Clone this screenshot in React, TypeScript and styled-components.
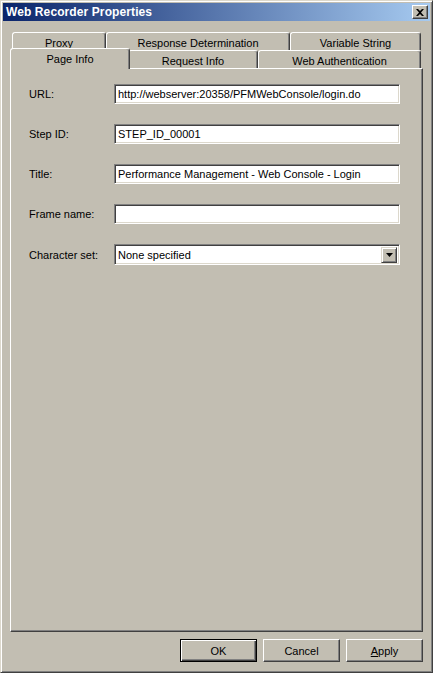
import React from 'react';
import styled, { createGlobalStyle } from 'styled-components';

const FACE = '#c2beb2';

const Global = createGlobalStyle`
  html, body { margin: 0; padding: 0; background: ${FACE}; }
  body { font-family: "Liberation Sans", Arial, sans-serif; }
`;

const Window = styled.div`
  box-sizing: border-box;
  width: 433px;
  height: 673px;
  background: ${FACE};
  border: 1px solid;
  border-color: #dcd8cc #404040 #404040 #dcd8cc;
  box-shadow: inset 1px 1px #fff, inset -1px -1px #808080;
  padding: 2px;
  display: flex;
  flex-direction: column;
`;

const TitleBar = styled.div`
  height: 18px;
  flex: none;
  background: linear-gradient(to right, #0a246a, #a6caf0);
  display: flex;
  align-items: center;
  justify-content: space-between;
  padding: 0 2px 0 3px;
`;

const TitleText = styled.span`
  color: #fff;
  font: bold 12px "Liberation Sans", Arial, sans-serif;
  letter-spacing: 0.1px;
`;

const CloseBox = styled.div`
  box-sizing: border-box;
  width: 16px;
  height: 14px;
  background: ${FACE};
  border: 1px solid;
  border-color: #fff #404040 #404040 #fff;
  box-shadow: inset -1px -1px #808080;
  display: flex;
  align-items: center;
  justify-content: center;
`;

const Body = styled.div`
  flex: 1;
  display: flex;
  flex-direction: column;
  padding: 11px 7px 8px 7px;
  min-height: 0;
`;

const TabRow = styled.div`
  display: flex;
  align-items: flex-end;
  height: 18px;
  margin: 0 2px;
`;

const Tab = styled.div<{ $w: number; $active?: boolean }>`
  box-sizing: border-box;
  width: ${p => (p.$active ? p.$w + 4 : p.$w)}px;
  height: ${p => (p.$active ? 21 : 18)}px;
  margin: ${p => (p.$active ? '0 -2px -1px -2px' : '0')};
  position: ${p => (p.$active ? 'relative' : 'static')};
  z-index: ${p => (p.$active ? 2 : 'auto')};
  background: ${FACE};
  border: 1px solid;
  border-bottom: none;
  border-color: #fff #404040 transparent #fff;
  border-radius: 3px 3px 0 0;
  box-shadow: inset -1px 0 #808080;
  display: flex;
  align-items: center;
  justify-content: center;
  padding-top: ${p => (p.$active ? 0 : 2)}px;
  font: 11px "Liberation Sans", Arial, sans-serif;
  color: #000;
  white-space: nowrap;
`;

const Panel = styled.div`
  flex: 1;
  border: 1px solid;
  border-color: #fff #404040 #404040 #fff;
  box-shadow: inset -1px -1px #808080;
  padding: 15px 0 0 18px;
`;

const Form = styled.div`
  display: grid;
  grid-template-columns: 85px 286px;
  row-gap: 20px;
  align-items: center;
`;

const Label = styled.label`
  font: 11px "Liberation Sans", Arial, sans-serif;
  color: #000;
`;

const Field = styled.div`
  box-sizing: border-box;
  height: 20px;
  background: #fff;
  border: 1px solid;
  border-color: #808080 #fff #fff #808080;
  box-shadow: inset 1px 1px #404040, inset -1px -1px #dcd8cc;
  display: flex;
  align-items: center;
  padding-left: 3px;
  font: 11px "Liberation Sans", Arial, sans-serif;
  color: #000;
  white-space: nowrap;
  overflow: hidden;
`;

const Combo = styled(Field)`
  height: 21px;
  justify-content: space-between;
  padding: 2px 2px 2px 3px;
`;

const DropButton = styled.div`
  box-sizing: border-box;
  width: 16px;
  height: 16px;
  background: ${FACE};
  border: 1px solid;
  border-color: #dcd8cc #404040 #404040 #dcd8cc;
  box-shadow: inset 1px 1px #fff, inset -1px -1px #808080;
  display: flex;
  align-items: center;
  justify-content: center;
`;

const ButtonRow = styled.div`
  display: flex;
  justify-content: flex-end;
  gap: 6px;
  margin-top: 7px;
`;

const Button = styled.button<{ $default?: boolean }>`
  box-sizing: border-box;
  width: 77px;
  height: 23px;
  padding: 0;
  background: ${FACE};
  border: 1px solid;
  border-color: ${p => (p.$default ? '#000' : '#fff #404040 #404040 #fff')};
  box-shadow: ${p =>
    p.$default
      ? 'inset 1px 1px #fff, inset -1px -1px #404040, inset -2px -2px #808080'
      : 'inset -1px -1px #808080'};
  font: 11px "Liberation Sans", Arial, sans-serif;
  color: #000;
`;

const Underline = styled.span`
  text-decoration: underline;
`;

const fields = [
  { label: 'URL:', value: 'http://webserver:20358/PFMWebConsole/login.do' },
  { label: 'Step ID:', value: 'STEP_ID_00001' },
  { label: 'Title:', value: 'Performance Management - Web Console - Login' },
  { label: 'Frame name:', value: '' },
];

export default function App() {
  return (
    <>
      <Global />
      <Window>
        <TitleBar>
          <TitleText>Web Recorder Properties</TitleText>
          <CloseBox>
            <svg width="8" height="7" viewBox="0 0 8 7">
              <path d="M0 0h2l2 2 2-2h2L5 3.5 8 7H6L4 5 2 7H0l3-3.5z" fill="#000" />
            </svg>
          </CloseBox>
        </TitleBar>
        <Body>
          <TabRow>
            <Tab $w={94}>Proxy</Tab>
            <Tab $w={184}>Response Determination</Tab>
            <Tab $w={131}>Variable String</Tab>
          </TabRow>
          <TabRow>
            <Tab $w={116} $active>Page Info</Tab>
            <Tab $w={130}>Request Info</Tab>
            <Tab $w={163}>Web Authentication</Tab>
          </TabRow>
          <Panel>
            <Form>
              {fields.map(f => (
                <React.Fragment key={f.label}>
                  <Label>{f.label}</Label>
                  <Field>{f.value}</Field>
                </React.Fragment>
              ))}
              <Label>Character set:</Label>
              <Combo>
                <span>None specified</span>
                <DropButton>
                  <svg width="7" height="4" viewBox="0 0 7 4">
                    <path d="M0 0h7L3.5 4z" fill="#000" />
                  </svg>
                </DropButton>
              </Combo>
            </Form>
          </Panel>
          <ButtonRow>
            <Button $default>OK</Button>
            <Button>Cancel</Button>
            <Button>
              <Underline>A</Underline>pply
            </Button>
          </ButtonRow>
        </Body>
      </Window>
    </>
  );
}
